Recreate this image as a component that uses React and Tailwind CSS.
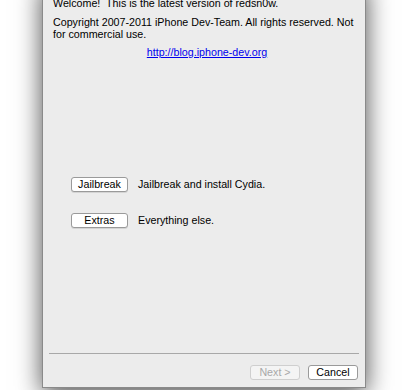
export default function App() {
  return (
    <div className="w-[407px] h-[390px] bg-white overflow-hidden relative" style={{ fontFamily: '"Liberation Sans", Arial, sans-serif' }}>
      <div className="absolute left-[42px] top-[-20px] w-[324px] h-[408px] bg-[#ececec] border border-[#8a8a8a] shadow-[0_6px_24px_rgba(0,0,0,0.7)] flex flex-col">
        <div className="pt-[16px] pl-[10px] pr-[4px] text-[10.7px] text-black leading-[12px]">
          <p className="whitespace-nowrap">Welcome!&nbsp; This is the latest version of redsn0w.</p>
          <p className="mt-[7px] whitespace-nowrap">Copyright 2007-2011 iPhone Dev-Team. All rights reserved. Not<br />for commercial use.</p>
          <p className="mt-[6px] text-center"><span className="text-[#0000ee] underline">http://blog.iphone-dev.org</span></p>
        </div>
        <div className="mt-[118px] pl-[28px] flex flex-col gap-[20px] text-[10.7px]">
          <div className="flex items-center gap-[10px]">
            <button className="w-[57px] h-[15px] bg-white border border-[#9a9a9a] rounded-[3px] text-[10.7px] leading-none shadow-[0_1px_0_rgba(0,0,0,0.1)]">Jailbreak</button>
            <span>Jailbreak and install Cydia.</span>
          </div>
          <div className="flex items-center gap-[10px]">
            <button className="w-[57px] h-[15px] bg-white border border-[#9a9a9a] rounded-[3px] text-[10.7px] leading-none shadow-[0_1px_0_rgba(0,0,0,0.1)]">Extras</button>
            <span>Everything else.</span>
          </div>
        </div>
        <div className="flex-1" />
        <div className="mx-[6px] border-t border-[#a8a8a8]" />
        <div className="flex justify-end gap-[8px] px-[7px] pt-[11px] pb-[7px]">
          <button className="w-[50px] h-[15px] bg-[#f4f4f4] border border-[#cfcfcf] rounded-[3px] text-[10.7px] leading-none text-[#a8a8a8]">Next &gt;</button>
          <button className="w-[50px] h-[15px] bg-white border border-[#9a9a9a] rounded-[3px] text-[10.7px] leading-none">Cancel</button>
        </div>
      </div>
    </div>
  );
}
